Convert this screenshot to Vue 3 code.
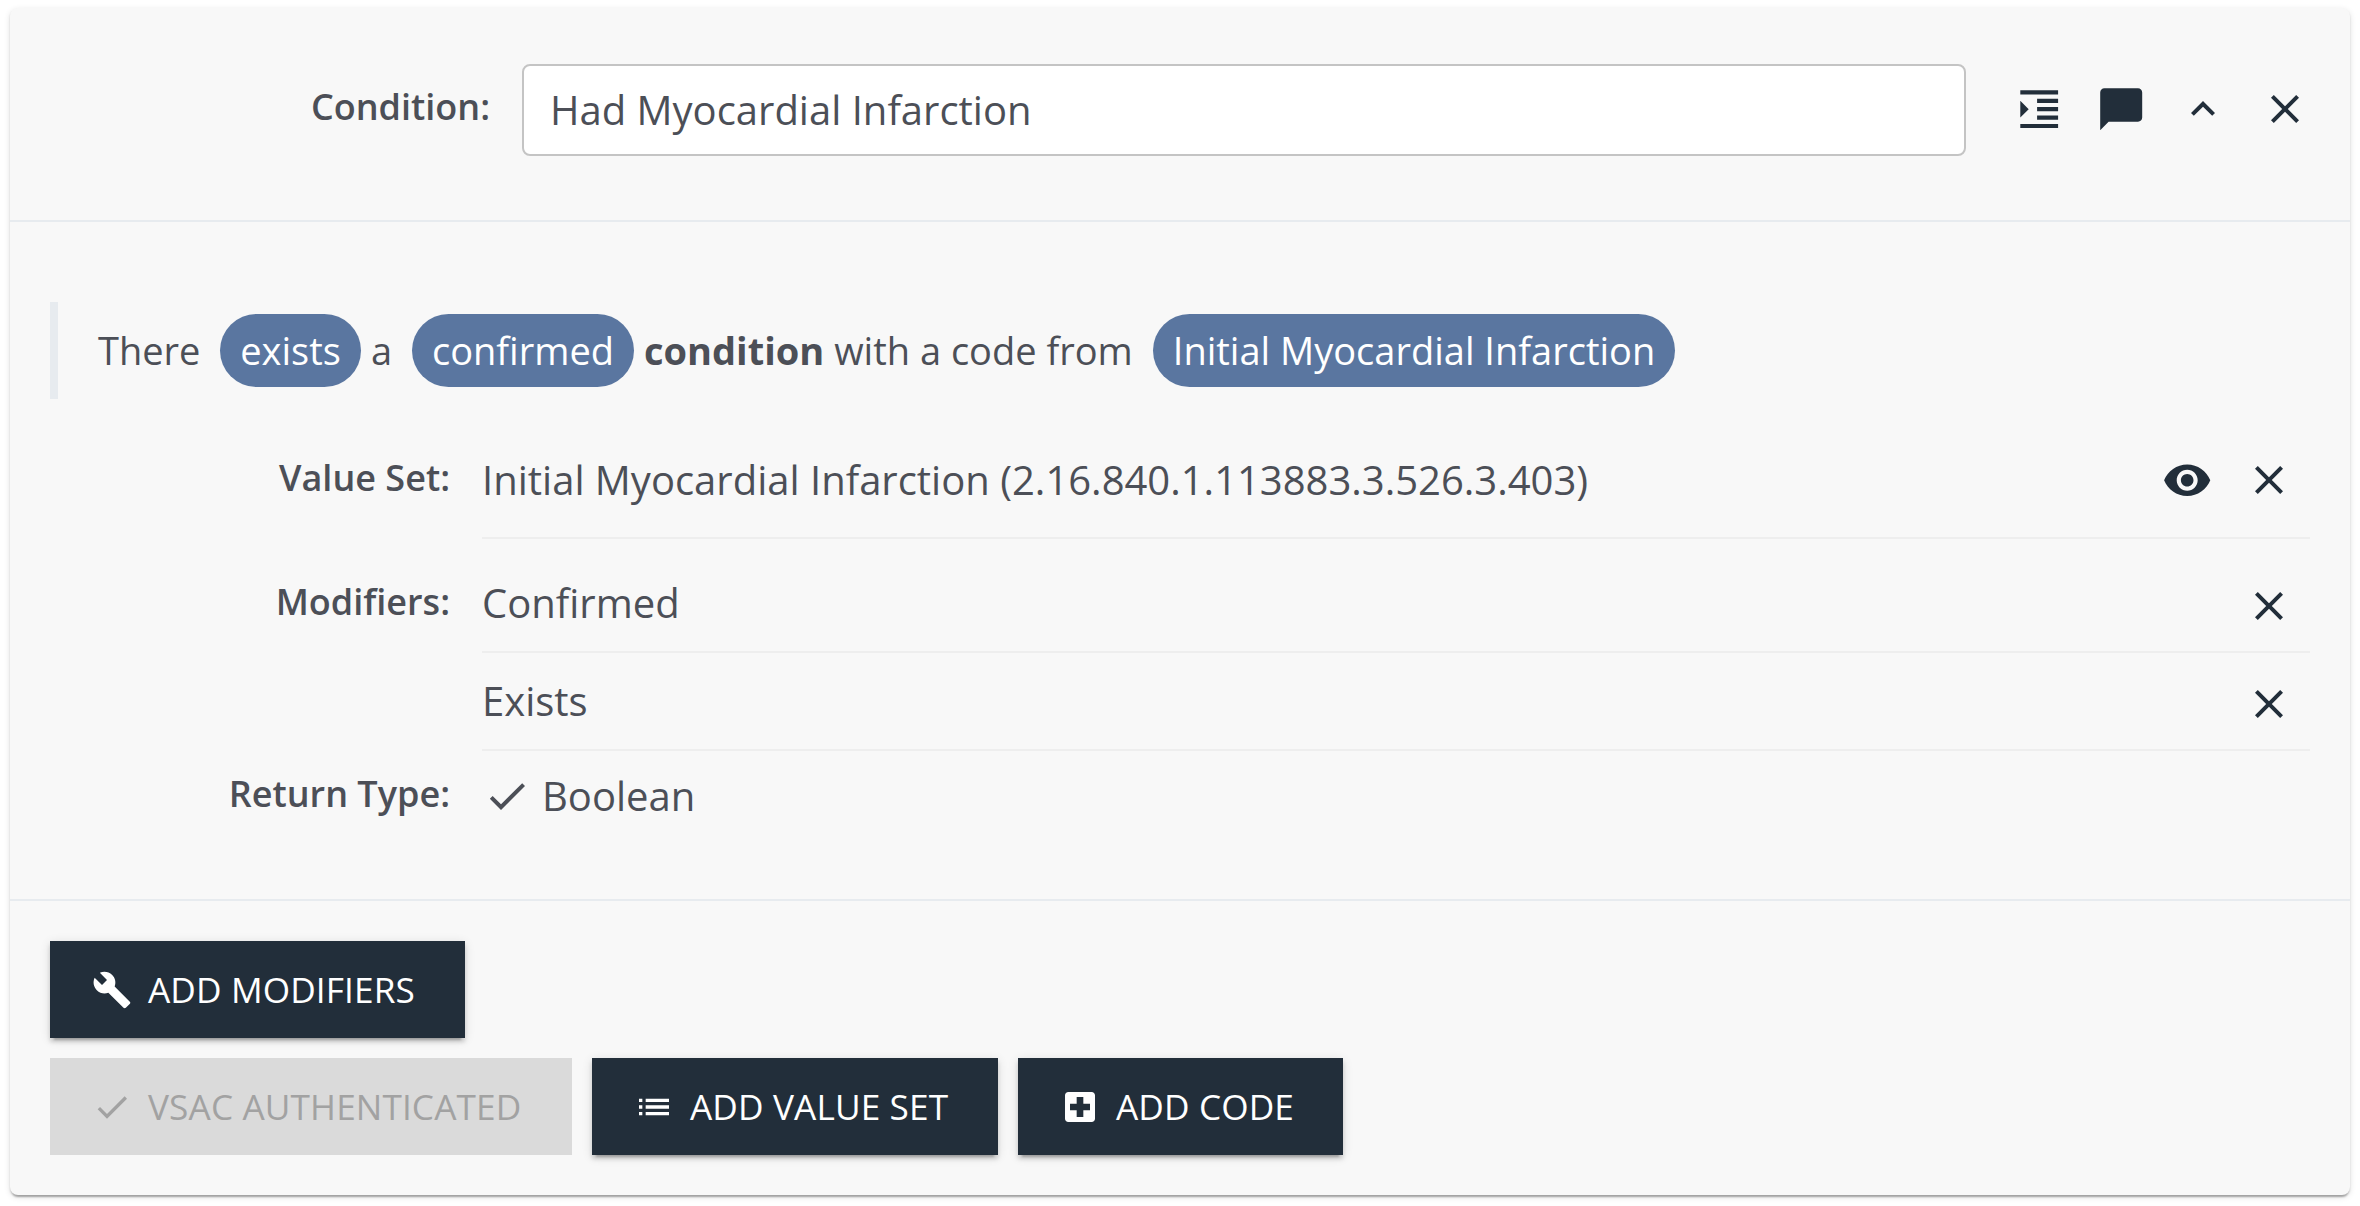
<script setup>
const icons = {
  indent: 'M3 21h18v-2H3v2zM3 8v8l4-4-4-4zm8 9h10v-2H11v2zM3 3v2h18V3H3zm8 6h10V7H11v2zm0 4h10v-2H11v2z',
  comment: 'M20 2H4c-1.1 0-2 .9-2 2v18l4-4h14c1.1 0 2-.9 2-2V4c0-1.1-.9-2-2-2z',
  collapse: 'M12 8l-6 6 1.41 1.41L12 10.83l4.59 4.58L18 14z',
  close: 'M19 6.41L17.59 5 12 10.59 6.41 5 5 6.41 10.59 12 5 17.59 6.41 19 12 13.41 17.59 19 19 17.59 13.41 12z',
  eye: 'M12 4.5C7 4.5 2.73 7.61 1 12c1.73 4.39 6 7.5 11 7.5s9.27-3.11 11-7.5c-1.73-4.39-6-7.5-11-7.5zM12 17c-2.76 0-5-2.24-5-5s2.24-5 5-5 5 2.24 5 5-2.24 5-5 5zm0-8c-1.66 0-3 1.34-3 3s1.34 3 3 3 3-1.34 3-3-1.34-3-3-3z',
  check: 'M9 16.17L4.83 12l-1.42 1.41L9 19 21 7l-1.41-1.41z',
  build: 'M22.7 19l-9.1-9.1c.9-2.3.4-5-1.5-6.9-2-2-5-2.4-7.4-1.3L9 6 6 9 1.6 4.7C.4 7.1.9 10.1 2.9 12.1c1.9 1.9 4.6 2.4 6.9 1.5l9.1 9.1c.4.4 1 .4 1.4 0l2.3-2.3c.5-.4.5-1.1.1-1.4z',
  list: 'M3 13h2v-2H3v2zm0 4h2v-2H3v2zm0-8h2V7H3v2zm4 4h14v-2H7v2zm0 4h14v-2H7v2zM7 7v2h14V7H7z',
  code: 'M19 3H5c-1.1 0-1.99.9-1.99 2L3 19c0 1.1.9 2 2 2h14c1.1 0 2-.9 2-2V5c0-1.1-.9-2-2-2zm-1 11h-4v4h-4v-4H6v-4h4V6h4v4h4v4z',
}
const headerActions = [
  { icon: 'indent', big: true },
  { icon: 'comment', big: true },
  { icon: 'collapse' },
  { icon: 'close' },
]
const modifiers = ['Confirmed', 'Exists']
</script>

<template>
  <div class="page">
    <main class="card">
      <header class="head">
        <div class="label head-label">Condition:</div>
        <div class="input">Had Myocardial Infarction</div>
        <div class="actions">
          <button v-for="a in headerActions" :key="a.icon" class="icon-btn">
            <svg :class="{ big: a.big }" viewBox="0 0 24 24"><path :d="icons[a.icon]" /></svg>
          </button>
        </div>
      </header>

      <section class="body">
        <div class="phrase">
          <span class="w-there">There</span>
          <span class="pill p-exists">exists</span>
          <span class="w-a">a</span>
          <span class="pill p-confirmed">confirmed</span>
          <span class="w-cond"><b>condition</b> with a code from</span>
          <span class="pill p-vs">Initial Myocardial Infarction</span>
        </div>

        <div class="row row-vs">
          <div class="label">Value Set:</div>
          <div class="value line">
            <span>Initial Myocardial Infarction (2.16.840.1.113883.3.526.3.403)</span>
            <div class="actions">
              <button class="icon-btn"><svg class="big" viewBox="0 0 24 24"><path :d="icons.eye" /></svg></button>
              <button class="icon-btn"><svg viewBox="0 0 24 24"><path :d="icons.close" /></svg></button>
            </div>
          </div>
        </div>

        <div class="row row-mod">
          <div class="label">Modifiers:</div>
          <div class="stack">
            <div v-for="m in modifiers" :key="m" class="value line mod">
              <span>{{ m }}</span>
              <button class="icon-btn"><svg viewBox="0 0 24 24"><path :d="icons.close" /></svg></button>
            </div>
          </div>
        </div>

        <div class="row row-ret">
          <div class="label">Return Type:</div>
          <div class="value ret">
            <svg viewBox="0 0 24 24"><path :d="icons.check" /></svg>
            <span>Boolean</span>
          </div>
        </div>
      </section>

      <footer class="foot">
        <div class="buttons">
          <button class="btn b-mod"><svg viewBox="0 0 24 24"><path :d="icons.build" /></svg><span>ADD MODIFIERS</span></button>
        </div>
        <div class="buttons">
          <button class="btn b-vsac" disabled><svg viewBox="0 0 24 24"><path :d="icons.check" /></svg><span>VSAC AUTHENTICATED</span></button>
          <button class="btn b-set"><svg viewBox="0 0 24 24"><path :d="icons.list" /></svg><span>ADD VALUE SET</span></button>
          <button class="btn b-code"><svg viewBox="0 0 24 24"><path :d="icons.code" /></svg><span>ADD CODE</span></button>
        </div>
      </footer>
    </main>
  </div>
</template>

<style>
body {
  background: #fff;
}
</style>

<style scoped>
* {
  box-sizing: border-box;
}
.page {
  height: 1206px;
  padding: 8px 10px 0;
}
.card {
  display: flex;
  flex-direction: column;
  height: 1187px;
  border-radius: 8px;
  background: #f8f8f8;
  color: #4c4f57;
  font-family: "Open Sans", sans-serif;
  font-size: 40px;
  line-height: 56px;
  box-shadow: 0 4px 2px -2px rgba(0, 0, 0, 0.2), 0 2px 2px rgba(0, 0, 0, 0.14), 0 2px 6px rgba(0, 0, 0, 0.12);
}
button {
  padding: 0;
  border: 0;
  background: none;
  font: inherit;
}
svg {
  display: block;
  flex: none;
  width: 48px;
  height: 48px;
  fill: currentColor;
}
svg.big {
  width: 50.4px;
  height: 50.4px;
}
.label {
  flex: none;
  width: 400px;
  font-size: 36px;
  font-weight: 600;
  text-align: right;
  white-space: nowrap;
}
.head {
  display: flex;
  align-items: flex-start;
  height: 214px;
  padding: 56px 24px 0 0;
  border-bottom: 2px solid #e7ebef;
}
.head-label {
  width: 480px;
  padding-top: 15px;
}
.input {
  width: 1444px;
  height: 92px;
  margin-left: 32px;
  padding: 16px 26px;
  border: 2px solid #c4c4c4;
  border-radius: 8px;
  background: #fff;
}
.head .actions {
  margin: 4px 0 0 32px;
}
.actions {
  display: flex;
}
.icon-btn {
  display: flex;
  flex: none;
  align-items: center;
  justify-content: center;
  width: 82px;
  height: 82px;
  color: #222e3a;
}
.body {
  height: 679px;
  padding: 80px 40px 0;
  border-bottom: 2px solid #e7ebef;
}
.phrase {
  display: flex;
  align-items: center;
  height: 97px;
  padding-left: 40px;
  border-left: 8px solid #e7ebef;
  font-size: 38px;
  white-space: nowrap;
}
.phrase > span {
  height: 73px;
  padding-top: 8px;
}
.w-there {
  width: 122px;
}
.w-a {
  width: 41px;
  margin-left: 10px;
}
.w-cond {
  width: 509px;
  margin-left: 10px;
}
.pill {
  border-radius: 37px;
  background: #5a76a0;
  color: #fff;
  text-align: center;
}
.p-exists {
  width: 141px;
}
.p-confirmed {
  width: 222px;
}
.p-vs {
  width: 522px;
}
.row {
  display: flex;
}
.value {
  display: flex;
  flex: 1;
  justify-content: space-between;
  align-items: center;
}
.row > .value,
.stack {
  margin-left: 32px;
}
.line {
  border-bottom: 2px solid #eee;
}
.row-vs {
  height: 140px;
}
.row-vs .label {
  padding-top: 51px;
}
.row-vs .value {
  padding-top: 24px;
}
.row-mod {
  height: 212px;
  padding-top: 16px;
}
.row-mod .label {
  padding-top: 19px;
}
.stack {
  flex: 1;
}
.mod {
  height: 98px;
  padding-top: 6px;
}
.mod span {
  margin-top: -7px;
}
.row-ret .label {
  padding-top: 15px;
}
.row-ret .value {
  justify-content: flex-start;
  gap: 11px;
  padding: 17px 0 0 1px;
}
.foot {
  display: flex;
  flex-direction: column;
  gap: 20px;
  padding: 40px 40px 0;
}
.buttons {
  display: flex;
  gap: 20px;
}
.btn {
  display: flex;
  align-items: center;
  height: 97px;
  padding: 0 0 0 42px;
  background: #222e3a;
  color: #fff;
  font-size: 35.2px;
  letter-spacing: 0.12px;
  white-space: nowrap;
  box-shadow: 0 6px 2px -4px rgba(0, 0, 0, 0.2), 0 4px 4px rgba(0, 0, 0, 0.14), 0 2px 10px rgba(0, 0, 0, 0.12);
}
.btn svg {
  width: 40px;
  height: 40px;
  margin-right: 16px;
}
.btn span {
  padding-bottom: 2px;
}
.btn:disabled {
  background: #dadada;
  color: #a2a2a2;
  box-shadow: none;
}
.b-mod {
  width: 415px;
}
.b-vsac {
  width: 522px;
}
.b-set {
  width: 406px;
}
.b-code {
  width: 325px;
}
</style>
